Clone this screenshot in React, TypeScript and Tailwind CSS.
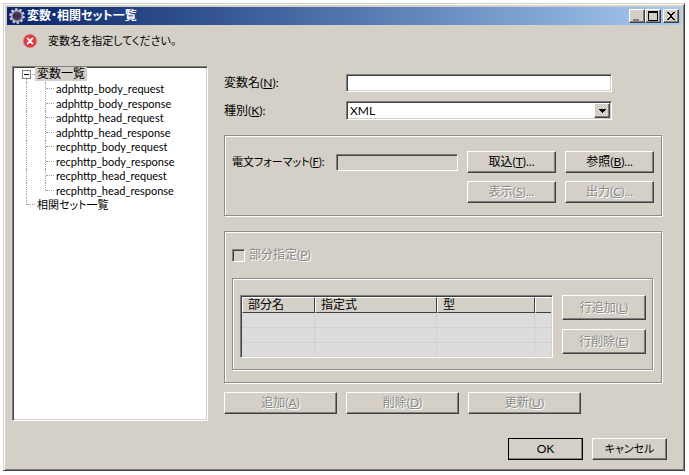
import type { ReactNode } from "react";
import { clsx } from "clsx";

const requests = [
  "adphttp_body_request",
  "adphttp_body_response",
  "adphttp_head_request",
  "adphttp_head_response",
  "recphttp_body_request",
  "recphttp_body_response",
  "recphttp_head_request",
  "recphttp_head_response",
];

const sunken =
  "border border-t-[#808080] border-l-[#808080] border-r-white border-b-white shadow-[inset_1px_1px_0_#404040,inset_-1px_-1px_0_#d4d0c8]";
const raised =
  "border border-t-white border-l-white border-r-[#404040] border-b-[#404040] shadow-[inset_-1px_-1px_0_#808080]";
const etched =
  "border border-[#8c8c88] shadow-[inset_1px_1px_0_white,1px_1px_0_white]";

function Mnemonic({ text, hotkey }: { text: string; hotkey: string }) {
  return (
    <>
      {text}(<u className="underline-offset-1">{hotkey}</u>)
    </>
  );
}

function Button({
  children,
  className,
  disabled,
}: {
  children: ReactNode;
  className?: string;
  disabled?: boolean;
}) {
  return (
    <button
      type="button"
      disabled={disabled}
      className={clsx(
        "flex items-center justify-center whitespace-nowrap bg-[#d4d0c8]",
        raised,
        disabled && "text-[#8a8a86] [text-shadow:1px_1px_0_white]",
        className,
      )}
    >
      {children}
    </button>
  );
}

function CaptionButton({ label, children }: { label: string; children: ReactNode }) {
  return (
    <button
      type="button"
      aria-label={label}
      className={clsx("flex h-[14px] w-4 items-center justify-center bg-[#d4d0c8]", raised)}
    >
      <svg viewBox="0 0 12 10" className="h-[10px] w-3" shapeRendering="crispEdges">
        {children}
      </svg>
    </button>
  );
}

function TitleBar() {
  return (
    <header className="flex h-[18px] items-center bg-linear-to-r from-[#0a246a] to-[#a6caf0] pr-0.5 pl-[2px] text-white">
      <svg viewBox="0 0 16 16" className="size-4 shrink-0" aria-hidden="true">
        <circle cx="8" cy="8" r="6.6" fill="none" stroke="#d8d2dc" strokeWidth="2.4" strokeDasharray="2.4 1.75" />
        <circle cx="8" cy="8" r="5.4" fill="#4b3b63" stroke="#b5adbd" strokeWidth="1.6" />
        <path d="M4 7h8M4 9h8" stroke="#302548" strokeWidth="1" />
      </svg>
      <h1 className="ml-0.5 flex-1 text-[12px] font-bold">変数・相関セット一覧</h1>
      <div className="flex">
        <CaptionButton label="最小化">
          <path d="M2 8h6v2H2z" fill="#808080" />
        </CaptionButton>
        <CaptionButton label="最大化">
          <path d="M1 0h10v10H1zM2 2v7h8V2z" fill="#000" fillRule="evenodd" />
        </CaptionButton>
        <div className="ml-0.5 flex">
          <CaptionButton label="閉じる">
            <path
              d="M2 1h2v1h1v1h2V2h1V1h2v1H9v1H8v1H7v2h1v1h1v1h1v1H8V8H7V7H5v1H4v1H2V8h1V7h1V6h1V4H4V3H3V2H2z"
              fill="#000"
            />
          </CaptionButton>
        </div>
      </div>
    </header>
  );
}

function Message() {
  return (
    <div className="flex h-[41px] items-center gap-[11px] pb-[9px] pl-4" role="alert">
      <svg viewBox="0 0 14 14" className="size-[14px]" aria-hidden="true">
        <circle cx="7" cy="7" r="6.6" fill="#dc3c46" stroke="#e57076" strokeWidth=".8" />
        <path d="M4.6 4.4l4.8 5.2M9.4 4.4L4.6 9.6" stroke="#fff" strokeWidth="1.7" strokeLinecap="round" />
      </svg>
      <p className="text-[11px]">変数名を指定してください。</p>
    </div>
  );
}

function Tree() {
  return (
    <nav className={clsx("w-[196px] shrink-0 bg-white pl-[13px]", sunken)}>
      <ul className="grid h-[145px] auto-rows-fr leading-none">
        <li className="relative flex items-center">
          <span className="h-1/2 self-end border-l border-dotted border-[#a0a0a0]" />
          <button
            type="button"
            aria-label="折りたたむ"
            className="absolute -left-1 flex size-[9px] items-center justify-center border border-[#808080] bg-white"
          >
            <span className="h-px w-[5px] bg-black" />
          </button>
          <span className="w-2 border-t border-dotted border-[#a0a0a0]" />
          <span className="bg-[#d4d0c8] px-0.5 py-px">変数一覧</span>
        </li>
        {requests.map((name, i) => (
          <li key={name} className="flex items-center">
            <span className="h-full w-[19px] border-l border-dotted border-[#a0a0a0]" />
            <span
              className={clsx(
                "self-start border-l border-dotted border-[#a0a0a0]",
                i === requests.length - 1 ? "h-1/2" : "h-full",
              )}
            />
            <span className="w-2 border-t border-dotted border-[#a0a0a0]" />
            <span className="pl-0.5 text-[11px]">{name}</span>
          </li>
        ))}
        <li className="flex items-center">
          <span className="h-1/2 self-start border-l border-dotted border-[#a0a0a0]" />
          <span className="w-2 border-t border-dotted border-[#a0a0a0]" />
          <span className="px-0.5 text-[11px]">相関セット一覧</span>
        </li>
      </ul>
    </nav>
  );
}

function VariableFields() {
  return (
    <div className="mr-[50px] grid grid-cols-[122px_1fr] items-center gap-y-[9px]">
      <label htmlFor="name">
        <Mnemonic text="変数名" hotkey="N" />:
      </label>
      <input id="name" className={clsx("h-[18px] w-full bg-white px-1", sunken)} />
      <label htmlFor="kind">
        <Mnemonic text="種別" hotkey="K" />:
      </label>
      <div className="relative">
        <select
          id="kind"
          className={clsx("block h-[19px] w-full appearance-none bg-white pr-5 pl-[3px] leading-none", sunken)}
        >
          <option>XML</option>
        </select>
        <span
          className={clsx(
            "pointer-events-none absolute top-0.5 right-0.5 flex h-[15px] w-4 items-center justify-center bg-[#d4d0c8]",
            raised,
          )}
        >
          <svg viewBox="0 0 7 4" className="h-1 w-[7px]" shapeRendering="crispEdges" aria-hidden="true">
            <path d="M0 0h7v1H6v1H5v1H4v1H3V3H2V2H1V1H0z" />
          </svg>
        </span>
      </div>
    </div>
  );
}

function FormatGroup() {
  return (
    <section className={clsx("mt-[15px] flex h-[81px] items-start px-[7px] pt-[15px]", etched)}>
      <label htmlFor="format" className="w-[104px] shrink-0 text-[11px] leading-[22px]">
        <Mnemonic text="電文フォーマット" hotkey="F" />:
      </label>
      <input
        id="format"
        readOnly
        className={clsx("mt-[3px] mr-[9px] h-[17px] min-w-0 flex-1 bg-[#d4d0c8]", sunken)}
      />
      <div className="grid grid-cols-[89px_89px] gap-x-[9px] gap-y-2">
        <Button className="h-[22px]">
          <Mnemonic text="取込" hotkey="T" />...
        </Button>
        <Button className="h-[22px]">
          <Mnemonic text="参照" hotkey="B" />...
        </Button>
        <Button className="h-[22px]" disabled>
          <Mnemonic text="表示" hotkey="S" />...
        </Button>
        <Button className="h-[22px]" disabled>
          <Mnemonic text="出力" hotkey="C" />...
        </Button>
      </div>
    </section>
  );
}

function PartsTable() {
  const th =
    "h-4 border-t border-l border-t-white border-l-white border-r border-r-[#404040] border-b border-b-[#404040] bg-[#d4d0c8] pl-[5px] text-left font-normal leading-none";
  return (
    <div className={clsx("h-[63px] min-w-0 flex-1 bg-[#dcdcdc] p-px", sunken)}>
      <table className="w-full table-fixed border-separate border-spacing-0">
        <colgroup>
          <col className="w-[73px]" />
          <col className="w-[122px]" />
          <col />
          <col className="w-4" />
        </colgroup>
        <thead>
          <tr>
            <th className={th}>部分名</th>
            <th className={th}>指定式</th>
            <th className={th}>型</th>
            <th className={clsx(th, "border-r-0")} />
          </tr>
        </thead>
        <tbody>
          {[0, 1, 2].map((row) => (
            <tr key={row}>
              {[0, 1, 2, 3].map((col) => (
                <td
                  key={col}
                  className={clsx(
                    "border-[#d4d0c8]",
                    row < 2 ? "h-[15px] border-b" : "h-3",
                    col < 3 && "border-r",
                  )}
                />
              ))}
            </tr>
          ))}
        </tbody>
      </table>
    </div>
  );
}

function PartsGroup() {
  return (
    <section className={clsx("mt-[15px] pt-[15px] pr-2 pb-3 pl-[7px]", etched)}>
      <div className="flex h-4 items-center gap-1 text-[#8a8a86] [text-shadow:1px_1px_0_white]">
        <input
          id="partial"
          type="checkbox"
          disabled
          className={clsx("size-[13px] appearance-none bg-[#d4d0c8]", sunken)}
        />
        <label htmlFor="partial">
          <Mnemonic text="部分指定" hotkey="P" />
        </label>
      </div>
      <div className={clsx("mt-[15px] flex items-start gap-[9px] pt-4 pr-[6px] pb-[11px] pl-[7px]", etched)}>
        <PartsTable />
        <div className="grid w-[84px] shrink-0 gap-[9px]">
          <Button className="h-[25px]" disabled>
            <Mnemonic text="行追加" hotkey="L" />
          </Button>
          <Button className="h-[25px]" disabled>
            <Mnemonic text="行削除" hotkey="E" />
          </Button>
        </div>
      </div>
    </section>
  );
}

export default function App() {
  return (
    <div className="min-h-screen bg-white p-[3px] pr-1 pb-1 text-[12px] leading-4 text-black [font-family:Lato,'Noto_Sans_CJK_JP',sans-serif] [font-feature-settings:'palt']">
      <main className="border border-t-[#d4d0c8] border-l-[#d4d0c8] border-r-[#404040] border-b-[#404040] bg-[#d4d0c8] p-[3px] shadow-[inset_1px_1px_0_white,inset_-1px_-1px_0_#808080]">
        <TitleBar />
        <Message />
        <div className="flex h-[355px] gap-4 pr-[19px] pl-[5px]">
          <Tree />
          <div className="min-w-0 flex-1 pt-2">
            <VariableFields />
            <FormatGroup />
            <PartsGroup />
            <div className="mt-[9px] flex gap-[9px]">
              <Button className="h-[22px] w-[113px]" disabled>
                <Mnemonic text="追加" hotkey="A" />
              </Button>
              <Button className="h-[22px] w-[113px]" disabled>
                <Mnemonic text="削除" hotkey="D" />
              </Button>
              <Button className="h-[22px] w-[113px]" disabled>
                <Mnemonic text="更新" hotkey="U" />
              </Button>
            </div>
          </div>
        </div>
        <footer className="flex justify-end gap-[9px] pt-[17px] pr-[14px] pb-[7px]">
          <Button className="h-[22px] w-[75px] outline outline-black -outline-offset-1">OK</Button>
          <Button className="h-[22px] w-[75px] text-[11px]">キャンセル</Button>
        </footer>
      </main>
    </div>
  );
}
